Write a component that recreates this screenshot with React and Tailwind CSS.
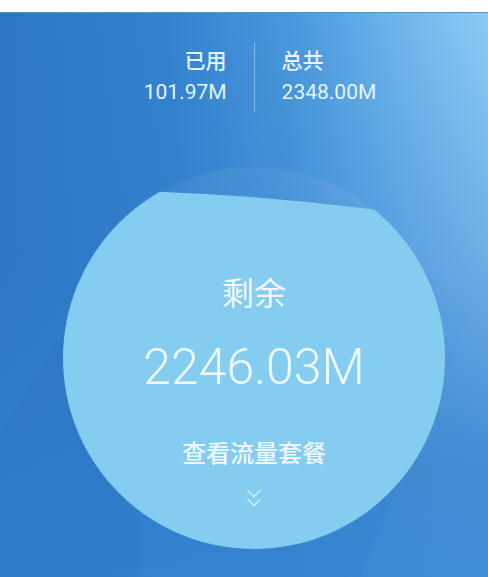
import React from "react";

export default function App() {
  const font = { fontFamily: 'Roboto, "Noto Sans CJK SC", "Noto Sans", sans-serif' };
  return (
    <div className="w-[488px] h-[577px] overflow-hidden flex flex-col bg-white" style={font}>
      <div className="h-[13px] shrink-0 bg-white border-b border-[#5b8fc0]" />
      <div className="relative flex-1 flex flex-col bg-[linear-gradient(90deg,#2d76c4_0%,#3483cf_35%,#4a98dc_60%,#6fb6ec_82%,#8ccbf6_100%)]">
        {/* lower darkening overlay */}
        <div className="absolute inset-0 bg-[linear-gradient(180deg,rgba(46,120,198,0)_0%,rgba(46,120,198,0.35)_45%,rgba(50,126,204,0.85)_80%,rgba(52,130,208,0.9)_100%)]" />
        {/* subtle long shadow bands */}
        <svg className="absolute inset-0" width="488" height="564" viewBox="0 0 488 564">
          <polygon points="0,420 140,200 140,564 0,564" fill="rgba(30,90,160,0.08)" />
          <polygon points="395,480 470,300 488,300 488,564 360,564" fill="rgba(120,180,235,0.08)" />
        </svg>

        <div className="relative flex flex-row justify-center items-stretch mt-[35px] ml-[32px]">
          <div className="flex flex-col items-end pr-[27px] text-[#e6f4fc]">
            <span className="text-[21px] leading-[27px] font-medium">已用</span>
            <span className="text-[21px] leading-[28px] mt-[3px]">101.97M</span>
          </div>
          <div className="w-px bg-[rgba(200,230,250,0.45)] my-[-6px]" />
          <div className="flex flex-col items-start pl-[27px] text-[#e6f4fc]">
            <span className="text-[21px] leading-[27px] font-medium">总共</span>
            <span className="text-[21px] leading-[28px] mt-[3px]">2348.00M</span>
          </div>
        </div>

        <div className="relative ml-[63px] mt-[61px] w-[382px] h-[382px] rounded-full overflow-hidden bg-[rgba(255,255,255,0.05)]">
          <svg className="absolute inset-0" width="382" height="382" viewBox="0 0 382 382">
            <path d="M0 24 L100 25 Q205 29 307 42 L382 60 V382 H0 Z" fill="#84ccf0" />
          </svg>
          <div className="relative flex flex-col items-center text-[#eef8fd]">
            <span className="mt-[109px] text-[32px] leading-[36px]">剩余</span>
            <span className="mt-[26px] text-[50px] leading-[58px] font-light">2246.03M</span>
            <span className="mt-[42px] text-[24px] leading-[32px] font-medium">查看流量套餐</span>
            <svg className="mt-[18px]" width="16" height="22" viewBox="0 0 16 22" fill="none" stroke="rgba(240,250,255,0.75)" strokeWidth="1.3">
              <path d="M1.5 2 L8 8.5 L14.5 2" />
              <path d="M1.5 11 L8 17.5 L14.5 11" />
            </svg>
          </div>
        </div>
      </div>
    </div>
  );
}
